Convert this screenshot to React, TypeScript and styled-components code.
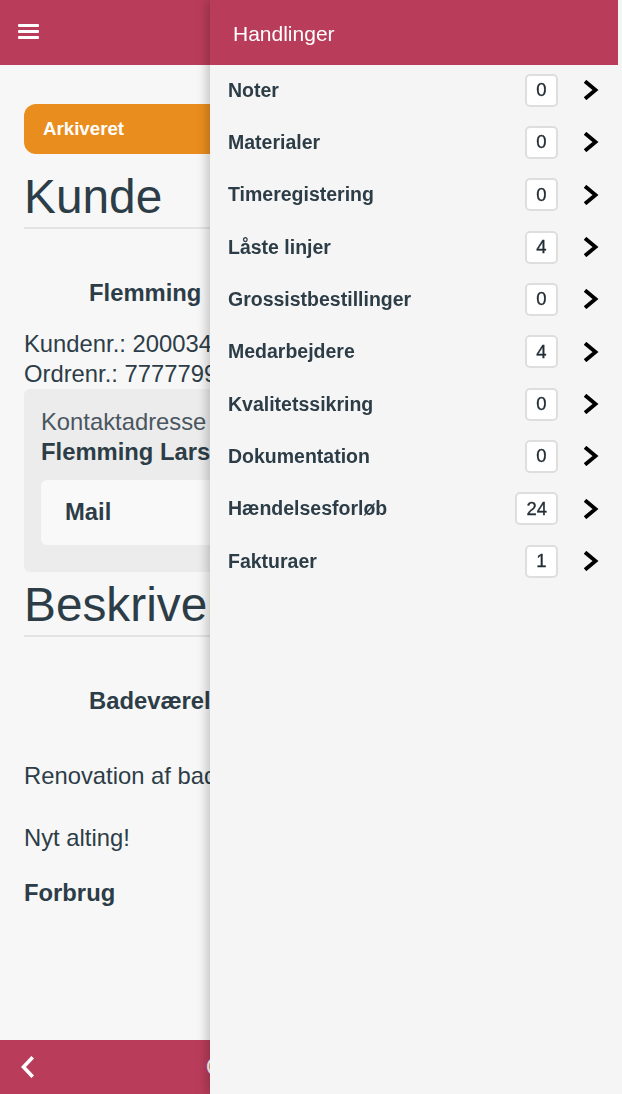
import React from "react";
import styled, { createGlobalStyle } from "styled-components";

const GlobalStyle = createGlobalStyle`
  html, body { margin: 0; padding: 0; }
  body {
    background: #f7f7f7;
    font-family: "Liberation Sans", Arial, sans-serif;
    color: #2d3d47;
    overflow: hidden;
  }
  * { box-sizing: border-box; }
`;

const RED = "#b93d5a";

const Page = styled.div`
  min-height: 100vh;
  display: flex;
  flex-direction: column;
  width: 622px;
`;

const TopBar = styled.header`
  height: 65px;
  background: ${RED};
  display: flex;
  align-items: center;
  padding-left: 18px;
  flex-shrink: 0;
`;

const Burger = styled.button`
  display: flex;
  flex-direction: column;
  gap: 3px;
  padding: 0;
  margin: 0;
  background: none;
  border: none;
  margin-top: -3px;
`;

const BurgerBar = styled.span`
  display: block;
  width: 21px;
  height: 3px;
  border-radius: 1px;
  background: #fff;
`;

const Main = styled.main`
  flex: 1;
  padding: 39px 24px 0 24px;
  display: flex;
  flex-direction: column;
`;

const StatusPill = styled.div`
  height: 50px;
  border-radius: 12px;
  background: #e98e1e;
  color: #fff;
  font-weight: 700;
  font-size: 18.7px;
  display: flex;
  align-items: center;
  padding-left: 19px;
`;

const SectionTitle = styled.h1<{ $mt: number }>`
  margin: ${(p) => p.$mt}px 0 0 0;
  font-size: 47.8px;
  font-weight: 400;
  line-height: 56px;
  padding-bottom: 2px;
  border-bottom: 2px solid #e3e3e3;
  white-space: nowrap;
`;

const Text = styled.p<{ $mt: number; $bold?: boolean; $indent?: boolean }>`
  margin: ${(p) => p.$mt}px 0 0 ${(p) => (p.$indent ? 65 : 0)}px;
  font-size: 23.8px;
  line-height: 30px;
  font-weight: ${(p) => (p.$bold ? 700 : 400)};
  white-space: nowrap;
`;

const ContactBox = styled.section`
  background: #ececec;
  border-radius: 6px;
  padding: 18px 17px 27px 17px;
  display: flex;
  flex-direction: column;
`;

const ContactLabel = styled.div`
  font-size: 23.8px;
  line-height: 30px;
  color: #4a565f;
  white-space: nowrap;
`;

const ContactName = styled.div`
  font-size: 23.8px;
  line-height: 30px;
  font-weight: 700;
  white-space: nowrap;
`;

const ContactCard = styled.div`
  margin-top: 13px;
  background: #f9f9f9;
  border-radius: 6px;
  padding: 17.5px 24px;
  font-size: 23.8px;
  line-height: 30px;
  font-weight: 700;
`;

const BottomBar = styled.footer`
  height: 54px;
  background: ${RED};
  display: grid;
  grid-template-columns: 206px 1fr;
  align-items: center;
  flex-shrink: 0;
`;

const BackButton = styled.button`
  background: none;
  border: none;
  padding: 0 0 0 20px;
  margin: 0;
  display: flex;
  align-items: center;
  justify-self: start;
`;

const BottomTitle = styled.span`
  color: #fff;
  font-size: 23.5px;
  white-space: nowrap;
`;

const Drawer = styled.aside`
  position: fixed;
  top: 0;
  right: 0;
  width: 412px;
  height: 100vh;
  background: #f5f5f5;
  box-shadow: -3px 0 10px rgba(0, 0, 0, 0.22);
  display: flex;
  flex-direction: column;
`;

const DrawerHeader = styled.div`
  height: 65px;
  margin-right: 4px;
  background: ${RED};
  color: #fff;
  font-size: 21px;
  display: flex;
  align-items: center;
  padding-left: 23px;
  padding-top: 2px;
`;

const ActionList = styled.ul`
  list-style: none;
  margin: -1px 0 0 0;
  padding: 0;
`;

const ActionRow = styled.li`
  height: 52.33px;
  display: flex;
  align-items: center;
  padding: 0 23px 0 18px;
`;

const ActionLabel = styled.span`
  flex: 1;
  font-size: 19.5px;
  font-weight: 700;
  color: #2d3d47;
`;

const CountBadge = styled.span`
  min-width: 33px;
  height: 33px;
  padding: 0 9px;
  border: 2px solid #dedede;
  border-radius: 5px;
  background: #fff;
  display: flex;
  align-items: center;
  justify-content: center;
  font-size: 18.5px;
  color: #222d35;
  -webkit-text-stroke: 0.3px #222d35;
`;

const Chevron = styled.svg`
  margin-left: 26px;
  display: block;
`;

const actions: [string, number][] = [
  ["Noter", 0],
  ["Materialer", 0],
  ["Timeregistering", 0],
  ["Låste linjer", 4],
  ["Grossistbestillinger", 0],
  ["Medarbejdere", 4],
  ["Kvalitetssikring", 0],
  ["Dokumentation", 0],
  ["Hændelsesforløb", 24],
  ["Fakturaer", 1],
];

export default function App() {
  return (
    <>
      <GlobalStyle />
      <Page>
        <TopBar>
          <Burger aria-label="Menu">
            <BurgerBar />
            <BurgerBar />
            <BurgerBar />
          </Burger>
        </TopBar>
        <Main>
          <StatusPill>Arkiveret</StatusPill>
          <SectionTitle $mt={15}>Kunde</SectionTitle>
          <Text $mt={49} $bold $indent>
            Flemming
          </Text>
          <Text $mt={20.5}>Kundenr.: 20003421</Text>
          <Text $mt={0}>Ordrenr.: 77777993</Text>
          <ContactBox>
            <ContactLabel>Kontaktadresse</ContactLabel>
            <ContactName>Flemming Larsen</ContactName>
            <ContactCard>Mail</ContactCard>
          </ContactBox>
          <SectionTitle $mt={5.5}>Beskrivelse</SectionTitle>
          <Text $mt={48.5} $bold $indent>
            Badeværelse
          </Text>
          <Text $mt={45}>Renovation af badeværelse</Text>
          <Text $mt={32}>Nyt alting!</Text>
          <Text $mt={25.5} $bold>
            Forbrug
          </Text>
        </Main>
        <BottomBar>
          <BackButton aria-label="Tilbage">
            <svg width="14" height="22" viewBox="0 0 14 22">
              <polyline
                points="11.5,2.5 3.5,11 11.5,19.5"
                fill="none"
                stroke="#fff"
                strokeWidth="3.6"
                strokeLinecap="square"
                strokeLinejoin="miter"
              />
            </svg>
          </BackButton>
          <BottomTitle>Ordre</BottomTitle>
        </BottomBar>
      </Page>
      <Drawer>
        <DrawerHeader>Handlinger</DrawerHeader>
        <ActionList>
          {actions.map(([label, count]) => (
            <ActionRow key={label}>
              <ActionLabel>{label}</ActionLabel>
              <CountBadge>{count}</CountBadge>
              <Chevron width="15" height="20" viewBox="0 0 15 20">
                <polyline
                  points="2.5,2.5 11.5,10 2.5,17.5"
                  fill="none"
                  stroke="#000"
                  strokeWidth="3.8"
                  strokeLinecap="square"
                  strokeLinejoin="miter"
                />
              </Chevron>
            </ActionRow>
          ))}
        </ActionList>
      </Drawer>
    </>
  );
}
